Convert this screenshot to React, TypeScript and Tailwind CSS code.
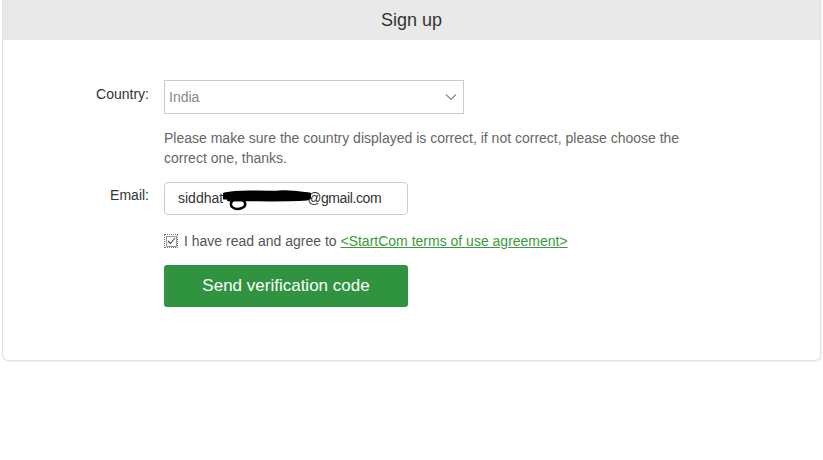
import React from "react";

function Scribble() {
  // redaction marker over part of the email address
  return (
    <svg width="88" height="26" viewBox="0 0 88 26" className="absolute left-0 top-[-5px]">
      <path d="M2 10 C18 6 36 9 55 8 C68 7 78 9 86 10" stroke="#000" strokeWidth="7" fill="none" strokeLinecap="round" />
      <path d="M6 13 C28 12 50 14 84 12" stroke="#000" strokeWidth="5" fill="none" strokeLinecap="round" />
      <path d="M10 14 C4 20 12 25 19 22 C25 19 22 13 15 14" stroke="#000" strokeWidth="2.5" fill="none" />
    </svg>
  );
}

export default function App() {
  return (
    <div className="min-h-[460px] bg-white" style={{ fontFamily: '"Liberation Sans", Arial, sans-serif' }}>
      <div className="ml-[2px] w-[819px] border border-t-0 border-[#e2e2e2] rounded-b-[6px] shadow-[1px_1px_2px_rgba(0,0,0,0.06)] overflow-hidden">
        {/* header */}
        <div className="h-[40px] bg-[#e9e9e9] flex items-center justify-center text-[18px] text-[#333]">
          Sign up
        </div>

        {/* body */}
        <div className="pt-[40px] pb-[53px]">
          <div className="grid grid-cols-[146px_1fr] gap-x-[15px]">
            <div className="text-right text-[14px] leading-[20px] text-[#333] pt-[4px]">Country:</div>
            <div>
              <div className="w-[300px] h-[34px] border border-[#ccc] flex items-center justify-between pl-[4px] pr-[6px]">
                <span className="text-[14px] text-[#888]">India</span>
                <svg width="12" height="8" viewBox="0 0 12 8">
                  <path d="M1 1.5 L6 6.5 L11 1.5" stroke="#888" strokeWidth="1.2" fill="none" />
                </svg>
              </div>
              <p className="mt-[14px] w-[530px] text-[14px] leading-[20px] text-[#666]">
                Please make sure the country displayed is correct, if not correct, please choose the correct one, thanks.
              </p>
            </div>

            <div className="mt-[14px] text-right text-[14px] leading-[20px] text-[#333] pt-[3px]">Email:</div>
            <div className="mt-[14px]">
              <div className="w-[244px] h-[33px] border border-[#ccc] rounded-[4px] flex items-center pl-[13px] text-[14px] text-[#333]">
                siddhat
                <span className="relative inline-block w-[84px] h-[16px]">
                  <Scribble />
                </span>
                <span className="tracking-[-0.4px]">@gmail.com</span>
              </div>
            </div>

            <div />
            <div className="mt-[16px] flex items-center h-[20px] text-[14px] text-[#555]">
              <span className="w-[14px] h-[14px] border border-dotted border-[#777] flex items-center justify-center mr-[6px]">
                <span className="w-[11px] h-[11px] border border-[#999] flex items-center justify-center">
                  <svg width="9" height="8" viewBox="0 0 9 8">
                    <path d="M1 4 L3.5 6.5 L8 1" stroke="#444" strokeWidth="1.1" fill="none" />
                  </svg>
                </span>
              </span>
              <span>I have read and agree to&nbsp;</span>
              <a className="text-[#3a9a3a] underline" href="#">&lt;StartCom terms of use agreement&gt;</a>
            </div>

            <div />
            <div className="mt-[14px]">
              <button className="w-[244px] h-[42px] rounded-[3px] bg-[#2f9340] text-white text-[17px]">
                Send verification code
              </button>
            </div>
          </div>
        </div>
      </div>
    </div>
  );
}
